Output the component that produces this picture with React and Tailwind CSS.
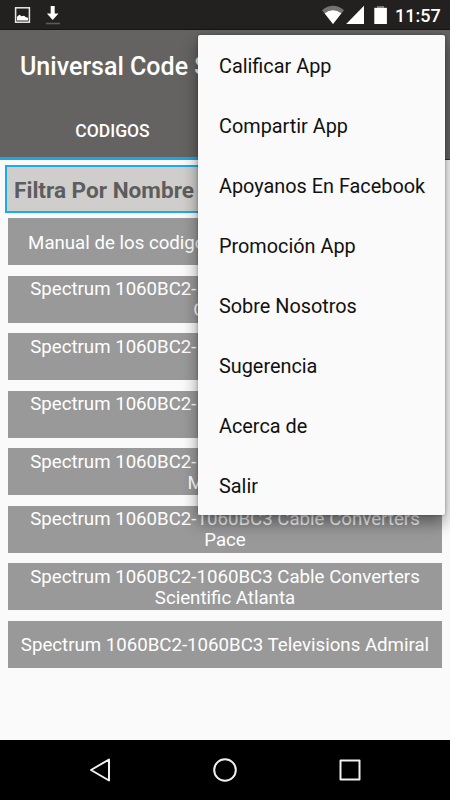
import React, { useState } from 'react';

const menuItems = [
  'Calificar App',
  'Compartir App',
  'Apoyanos En Facebook',
  'Promoción App',
  'Sobre Nosotros',
  'Sugerencia',
  'Acerca de',
  'Salir',
];

const cable = 'Spectrum 1060BC2-1060BC3 Cable Converters';

const codes = [
  ['Manual de los codigos Universal TV y Spectrum'],
  [cable, 'General'],
  [cable, 'GI'],
  [cable, 'LG'],
  [cable, 'Motorola'],
  [cable, 'Pace'],
  [cable, 'Scientific Atlanta'],
  ['Spectrum 1060BC2-1060BC3 Televisions Admiral'],
];

// === STATUS BAR ===
const StatusBar = () => (
  <div className="flex h-[30px] shrink-0 items-start justify-between border-b border-[#161514] bg-[#222120] text-white">
    <svg width="80" height="29" viewBox="0 0 80 29">
      <rect x="15.6" y="7.8" width="13.8" height="14.4" fill="none" stroke="#e8e8e8" strokeWidth="1.5" />
      <path d="M17 20.4v-3.7l2.5-2 2 1.5 2.5-.5 2 1.5 2 .5v2.7z" fill="#fff" />
      <path d="M50.7 6h4v7.5h3.8L52.7 20l-5.8-6.5h3.8z" fill="#fff" />
      <path d="M46 23.5h14" stroke="#5c5b5a" strokeWidth="1.6" />
    </svg>
    <div className="flex">
      <svg width="74" height="29" viewBox="320 0 74 29">
        <path d="M322 10.2Q333 1.5 344 10.2L333 24z" fill="#747372" />
        <path d="M324.6 13.3Q333 7.4 341.4 13.3L333 24z" fill="#fff" />
        <path d="M364 5.8V24h-17.8z" fill="#fff" />
        <path d="M377 6h7v2h-7z" fill="#747372" />
        <path d="M374.3 7.8h12.6V24h-12.6z" fill="#fff" />
      </svg>
      <span className="w-[56px] pl-[1px] text-[18px] leading-[32px] font-medium">11:57</span>
    </div>
  </div>
);

// === NAVIGATION BAR ===
const NavBar = () => (
  <div className="flex h-[60px] shrink-0 items-center justify-center gap-[95px] bg-black">
    <svg width="30" height="30" viewBox="0 0 30 30" fill="none" stroke="#f1efef" strokeWidth="2" strokeLinejoin="round">
      <path d="M24 4.5v21L6 15z" />
    </svg>
    <svg width="30" height="30" viewBox="0 0 30 30" fill="none" stroke="#f1efef" strokeWidth="2">
      <circle cx="15" cy="15" r="10.8" />
    </svg>
    <svg width="30" height="30" viewBox="0 0 30 30" fill="none" stroke="#f1efef" strokeWidth="2" strokeLinejoin="round">
      <rect x="5.5" y="5.5" width="19" height="19" />
    </svg>
  </div>
);

const App = () => {
  const [filter, setFilter] = useState('');

  return (
    <div className="relative flex h-[800px] w-[450px] flex-col overflow-hidden bg-[#fafafa] font-[Roboto,sans-serif]">
      <StatusBar />

      {/* Header */}
      <header className="h-[130px] shrink-0 bg-[#646361] text-white">
        <h1 className="h-[70px] overflow-hidden pl-5 text-[25px] leading-[73px] font-medium whitespace-nowrap">Universal Code Spectrum</h1>
        <div className="flex h-[60px] text-[17.5px] font-medium">
          <div className="flex-1 border-b-[3px] border-[#1aa7e0] text-center leading-[62px]">CODIGOS</div>
          <div className="flex-1 border-b border-[#33322f]" />
        </div>
      </header>

      {/* Filter */}
      <main className="flex-1 overflow-hidden">
        <input
          type="text"
          placeholder="Filtra Por Nombre"
          value={filter}
          onChange={(e) => setFilter(e.target.value)}
          className="mt-[5px] ml-[5px] block h-[48px] w-[440px] border-2 border-[#1aaee5] bg-[#d0cecd] pt-[2px] pl-[7px] text-[22.6px] font-bold outline-none placeholder:text-[#5d5d5d] placeholder:opacity-100"
        />

        {/* Codes */}
        <ul className="mx-[8px] mt-[5px] flex flex-col gap-[10.5px]">
          {codes.map((lines, i) => (
            <li key={i} className="flex h-[47px] flex-col items-center justify-center bg-[#999] pt-[2px] text-[18.67px] leading-[21px] whitespace-nowrap text-white first:pt-[3px]">
              {lines.map((line) => (
                <span key={line}>{line}</span>
              ))}
            </li>
          ))}
        </ul>
      </main>

      <NavBar />

      {/* Overflow menu */}
      <ul className="absolute top-[35px] left-[198px] w-[247px] rounded-[2px] bg-[#fafafa] text-[19.85px] text-[#111] shadow-[0_8px_16px_rgba(0,0,0,0.42),0_0_3px_rgba(0,0,0,0.3)]">
        {menuItems.map((item) => (
          <li key={item} className="h-[60px] pl-[21px] leading-[63px] whitespace-nowrap">{item}</li>
        ))}
      </ul>
    </div>
  );
};

export default App;
